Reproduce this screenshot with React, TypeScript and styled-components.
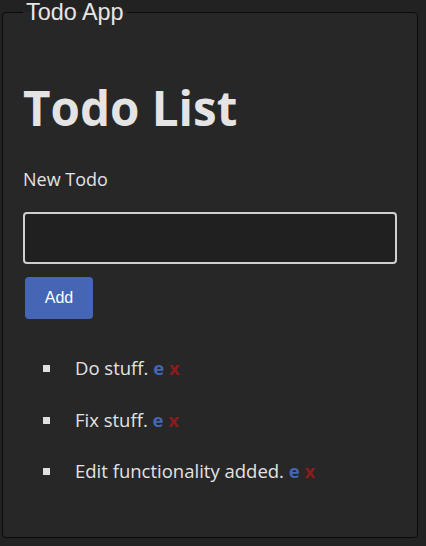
import React from "react";
import styled, { createGlobalStyle } from "styled-components";

const Global = createGlobalStyle`
  html, body { margin: 0; padding: 0; background: #222222; }
  body { font-family: "Open Sans", sans-serif; color: #e2e2e2; }
`;

const Frame = styled.fieldset`
  box-sizing: border-box;
  width: 416px;
  height: 538px;
  margin: 0 2px;
  padding: 0 20px;
  background: #272727;
  border: 1px solid #0a0a0a;
  border-radius: 4px;
`;

const Legend = styled.legend`
  font-family: "Liberation Sans", Arial, sans-serif;
  font-size: 23.4px;
  line-height: 24px;
  padding: 0 3px;
  margin-left: 0;
  color: #e6e6e6;
`;

const Title = styled.h1`
  font-family: "Open Sans", sans-serif;
  font-weight: 700;
  font-size: 47.5px;
  line-height: 60px;
  margin: 54px 0 0 0;
  color: #e4e4e4;
`;

const Label = styled.label`
  display: block;
  font-size: 18px;
  line-height: 24px;
  margin-top: 29px;
  color: #e2e2e2;
`;

const Input = styled.input`
  display: block;
  box-sizing: border-box;
  width: 374px;
  height: 52px;
  margin-top: 21px;
  background: #202020;
  border: 2px solid #cfcfcf;
  border-radius: 4px;
  color: #e2e2e2;
  font-size: 18px;
  padding: 0 10px;
  outline: none;
`;

const AddButton = styled.button`
  display: block;
  width: 68px;
  height: 42px;
  margin: 13px 0 0 2px;
  background: #4466b4;
  color: #ffffff;
  border: none;
  border-radius: 4px;
  font-family: "Liberation Sans", Arial, sans-serif;
  font-size: 16px;
  padding: 0;
`;

const List = styled.ul`
  list-style: none;
  margin: 36px 0 0 0;
  padding: 0;
  display: flex;
  flex-direction: column;
  gap: 25.7px;
`;

const Item = styled.li`
  display: flex;
  align-items: center;
  font-size: 18.5px;
  line-height: 26px;
  color: #e2e2e2;
`;

const Bullet = styled.span`
  width: 7px;
  height: 7px;
  background: #e0e0e0;
  margin: 1px 25px 0 20px;
  flex: none;
`;

const Text = styled.span`
  white-space: pre;
`;

const Action = styled.span<{ $tone: "edit" | "del" }>`
  font-weight: 700;
  color: ${(p) => (p.$tone === "edit" ? "#4466b4" : "#8b1c1c")};
  cursor: pointer;
`;

const todos = ["Do stuff.", "Fix stuff.", "Edit functionality added."];

export default function App() {
  return (
    <>
      <Global />
      <Frame>
        <Legend>Todo App</Legend>
        <Title>Todo List</Title>
        <Label htmlFor="new-todo">New Todo</Label>
        <Input id="new-todo" type="text" />
        <AddButton>Add</AddButton>
        <List>
          {todos.map((t) => (
            <Item key={t}>
              <Bullet />
              <Text>
                {t} <Action $tone="edit">e</Action> <Action $tone="del">x</Action>
              </Text>
            </Item>
          ))}
        </List>
      </Frame>
    </>
  );
}
